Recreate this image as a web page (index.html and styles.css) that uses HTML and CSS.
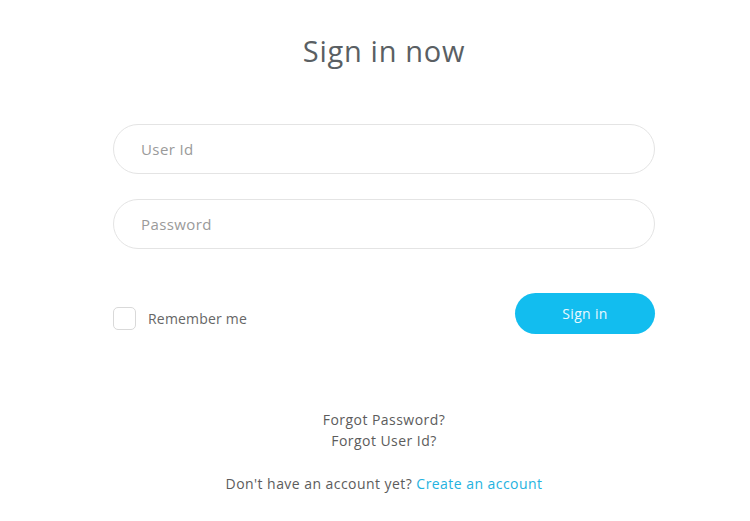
FILE: index.html
```html
<!DOCTYPE html>
<html lang="en">
<head>
<meta charset="utf-8">
<title>Sign in</title>
<link rel="stylesheet" href="styles.css">
</head>
<body>
<main class="page">
  <h1 class="title">Sign in now</h1>
  <form class="form">
    <input class="field" type="text" placeholder="User Id">
    <input class="field" type="password" placeholder="Password">
    <div class="actions">
      <label class="remember"><span class="box"></span>Remember me</label>
      <button class="btn" type="button">Sign in</button>
    </div>
  </form>
  <div class="links">
    <a class="muted" href="#">Forgot Password?</a>
    <a class="muted" href="#">Forgot User Id?</a>
  </div>
  <p class="signup">Don't have an account yet? <a class="accent" href="#">Create an account</a></p>
</main>
</body>
</html>
```
FILE: styles.css
```css
html, body {
  margin: 0;
  padding: 0;
  background: #ffffff;
}
body {
  font-family: "Open Sans", "Liberation Sans", sans-serif;
  color: #555;
}
.page {
  width: 542px;
  margin-left: 113px;
  display: flex;
  flex-direction: column;
  align-items: stretch;
}
.title {
  margin: 29px 0 0;
  text-align: center;
  font-weight: 400;
  font-size: 29px;
  line-height: 44px;
  color: #5a5f63;
  letter-spacing: 0.7px;
}
.form {
  margin-top: 51px;
  display: flex;
  flex-direction: column;
  gap: 25px;
}
.field {
  box-sizing: border-box;
  height: 50px;
  width: 100%;
  border: 1px solid #e4e4e4;
  border-radius: 25px;
  padding: 0 27px;
  font-family: inherit;
  font-size: 15px;
  letter-spacing: 0.4px;
  color: #555;
  outline: none;
  background: #fff;
}
.field::placeholder {
  color: #9a9a9a;
}
.actions {
  margin-top: 19px;
  display: flex;
  justify-content: space-between;
  align-items: center;
}
.remember {
  display: flex;
  align-items: center;
  gap: 12px;
  font-size: 14px;
  letter-spacing: 0.2px;
  color: #666;
  margin-top: 9px;
}
.box {
  box-sizing: border-box;
  width: 23px;
  height: 23px;
  border: 1.5px solid #d9d9d9;
  border-radius: 5px;
}
.btn {
  width: 140px;
  height: 41px;
  border: none;
  border-radius: 21px;
  background: #12bdef;
  color: #e9f9ff;
  font-family: inherit;
  font-size: 14px;
  letter-spacing: 0.3px;
}
.links {
  margin-top: 76px;
  display: flex;
  flex-direction: column;
  align-items: center;
  gap: 2px;
}
.muted {
  color: #5c5c5c;
  text-decoration: none;
  font-size: 14px;
  letter-spacing: 0.45px;
  line-height: 19px;
}
.signup {
  margin: 24px 0 0;
  text-align: center;
  font-size: 14px;
  letter-spacing: 0.45px;
  color: #5c5c5c;
}
.accent {
  color: #24b2e0;
  text-decoration: none;
}
```
